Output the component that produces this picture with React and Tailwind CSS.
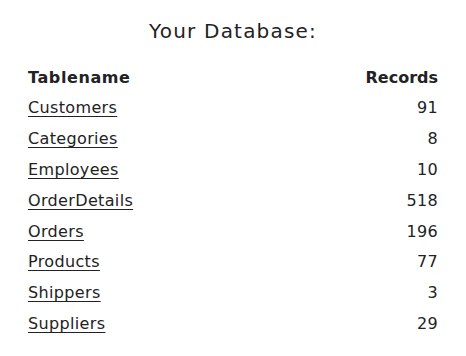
const tables = [
  { name: "Customers", records: 91 },
  { name: "Categories", records: 8 },
  { name: "Employees", records: 10 },
  { name: "OrderDetails", records: 518 },
  { name: "Orders", records: 196 },
  { name: "Products", records: 77 },
  { name: "Shippers", records: 3 },
  { name: "Suppliers", records: 29 },
];

export default function App() {
  return (
    <div
      className="min-h-[356px] w-full bg-white px-[28px] pt-[19px] text-[#222]"
      style={{ fontFamily: '"DejaVu Sans", Verdana, sans-serif' }}
    >
      <h2 className="text-center text-[20px] leading-[24px] tracking-[1.2px]">Your Database:</h2>
      <table className="mt-[20px] w-full border-collapse text-[16px] leading-[20px] tracking-[0.35px]">
        <thead>
          <tr>
            <th className="py-[5px] text-left font-bold tracking-[0.6px]">Tablename</th>
            <th className="py-[5px] text-right font-bold tracking-[0px]">Records</th>
          </tr>
        </thead>
        <tbody>
          {tables.map((t) => (
            <tr key={t.name}>
              <td className="py-[5.4px] text-left">
                <a href="#" className="text-[#222] underline underline-offset-[3px]">
                  {t.name}
                </a>
              </td>
              <td className="py-[5.4px] text-right">{t.records}</td>
            </tr>
          ))}
        </tbody>
      </table>
    </div>
  );
}
